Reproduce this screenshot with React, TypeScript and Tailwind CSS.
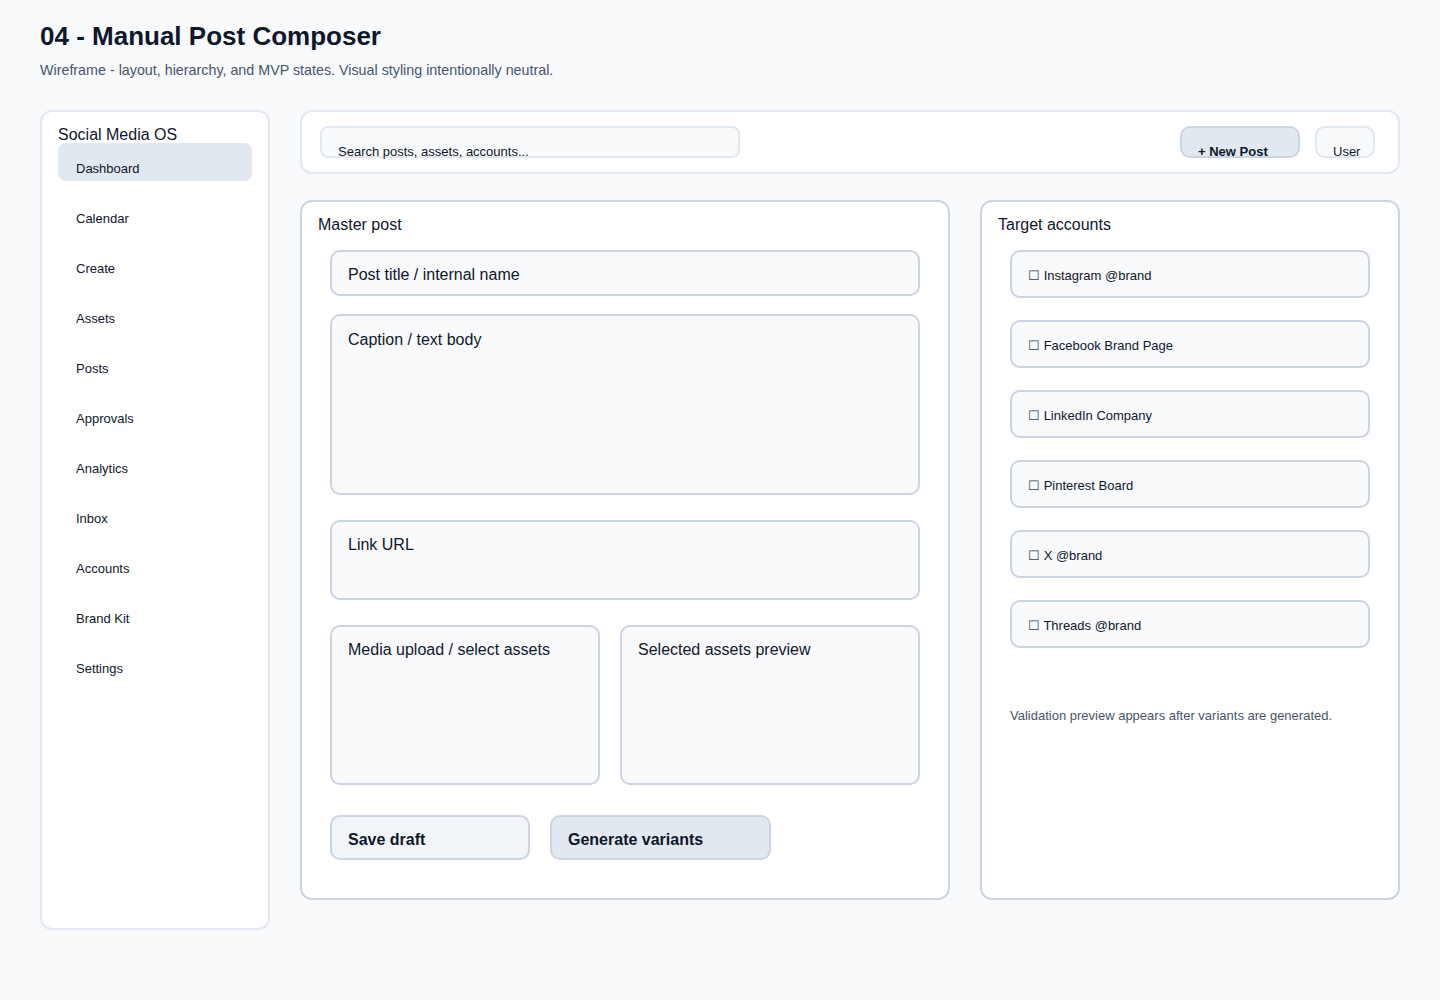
import React from 'react';

const navItems = [
  'Dashboard',
  'Calendar',
  'Create',
  'Assets',
  'Posts',
  'Approvals',
  'Analytics',
  'Inbox',
  'Accounts',
  'Brand Kit',
  'Settings',
];

const accounts = [
  'Instagram @brand',
  'Facebook Brand Page',
  'LinkedIn Company',
  'Pinterest Board',
  'X @brand',
  'Threads @brand',
];

interface FieldProps {
  label: string;
  className?: string;
}

// Neutral wireframe input box
const Field: React.FC<FieldProps> = ({ label, className = '' }) => (
  <div
    className={`rounded-[10px] border-2 border-[#cbd5e1] bg-[#f8fafc] px-4 pt-[13px] text-base leading-5 text-[#0f172a] ${className}`}
  >
    {label}
  </div>
);

const App: React.FC = () => {
  return (
    <div className="min-h-screen bg-[#f8fafc] px-10 pt-5 font-['Liberation_Sans',Arial,sans-serif] text-[#0f172a]">
      {/* Header */}
      <h1 className="text-[26px] font-bold leading-8 text-[#0f172a]">04 - Manual Post Composer</h1>
      <p className="mt-2 text-[14.3px] leading-5 text-[#475569]">
        Wireframe - layout, hierarchy, and MVP states. Visual styling intentionally neutral.
      </p>

      <div className="mt-[30px] flex gap-[30px]">
        {/* Sidebar */}
        <aside className="h-[820px] w-[230px] shrink-0 rounded-xl border-2 border-[#e2e8f0] bg-white px-4 pt-[14px]">
          <div className="text-base leading-[17px]">Social Media OS</div>
          <nav className="flex flex-col gap-3">
            {navItems.map((item, i) => (
              <div
                key={item}
                className={`h-[38px] rounded-lg pl-[18px] pt-[18px] text-[13px] leading-4 ${
                  i === 0 ? 'bg-[#e2e8f0]' : ''
                }`}
              >
                {item}
              </div>
            ))}
          </nav>
        </aside>

        {/* Main column */}
        <div className="flex w-[1100px] flex-col">
          {/* Top bar */}
          <div className="flex h-16 items-center rounded-xl border-2 border-[#e2e8f0] bg-white pl-[18px] pr-[23px]">
            <div className="h-8 w-[420px] rounded-lg border-2 border-[#e2e8f0] bg-[#f8fafc] pl-4 pt-4 text-[13px] leading-4">
              Search posts, assets, accounts...
            </div>
            <div className="ml-auto flex gap-[15px]">
              <div className="h-8 w-[120px] rounded-[10px] border-2 border-[#cbd5e1] bg-[#e2e8f0] pl-4 pt-4 text-[13px] font-bold leading-4">
                + New Post
              </div>
              <div className="h-8 w-[60px] rounded-[10px] border-2 border-[#e2e8f0] bg-[#f8fafc] pl-4 pt-4 text-[13px] leading-4">
                User
              </div>
            </div>
          </div>

          <div className="mt-[26px] flex gap-[30px]">
            {/* Master post */}
            <section className="h-[700px] w-[650px] rounded-xl border-2 border-[#cbd5e1] bg-white px-4 pt-[13px]">
              <div className="text-base leading-5">Master post</div>
              <div className="mx-3 mt-[15px] flex flex-col">
                <Field label="Post title / internal name" className="h-[46px]" />
                <Field label="Caption / text body" className="mt-[18px] h-[181px] !pt-[14px]" />
                <Field label="Link URL" className="mt-[25px] h-20" />
                <div className="mt-[25px] flex gap-5">
                  <Field label="Media upload / select assets" className="h-40 w-[270px]" />
                  <Field label="Selected assets preview" className="h-40 flex-1" />
                </div>
                <div className="mt-[30px] flex gap-5">
                  <div className="h-[45px] w-[200px] rounded-[10px] border-2 border-[#cbd5e1] bg-[#f1f5f9] px-4 pt-[13px] text-base font-bold leading-5">
                    Save draft
                  </div>
                  <div className="h-[45px] w-[221px] rounded-[10px] border-2 border-[#cbd5e1] bg-[#e2e8f0] px-4 pt-[13px] text-base font-bold leading-5">
                    Generate variants
                  </div>
                </div>
              </div>
            </section>

            {/* Target accounts */}
            <section className="h-[700px] w-[420px] rounded-xl border-2 border-[#cbd5e1] bg-white px-4 pt-[13px]">
              <div className="text-base leading-5">Target accounts</div>
              <div className="mx-3 mt-[15px] flex flex-col gap-[22px]">
                {accounts.map((acc) => (
                  <div
                    key={acc}
                    className="h-12 rounded-[10px] border-2 border-[#cbd5e1] bg-[#f8fafc] px-4 pt-4 text-[13px] leading-4"
                  >
                    <span className="text-[#334155]">☐</span> {acc}
                  </div>
                ))}
              </div>
              <p className="mx-3 mt-[60px] text-[13px] leading-4 text-[#475569]">
                Validation preview appears after variants are generated.
              </p>
            </section>
          </div>
        </div>
      </div>
    </div>
  );
};

export default App;
